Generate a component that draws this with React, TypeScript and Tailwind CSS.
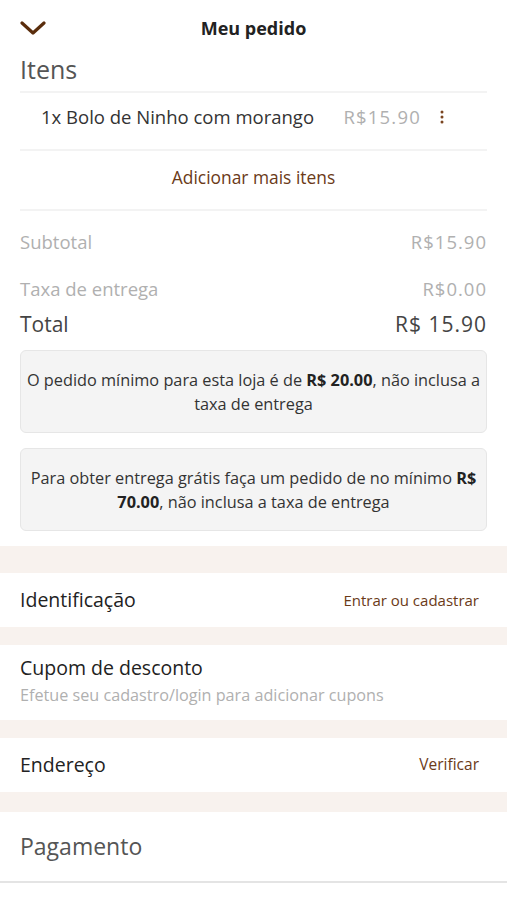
import React from "react";

const font = { fontFamily: '"Open Sans", "Noto Sans", sans-serif' };

export default function App() {
  return (
    <div className="w-[507px] min-h-[900px] bg-white text-[#333]" style={font}>
      {/* Header */}
      <div className="relative flex h-[56px] items-center justify-center">
        <svg className="absolute left-[20px] top-[20px]" width="26" height="16" viewBox="0 0 26 16">
          <path d="M2 3 L13 13 L24 3" fill="none" stroke="#5a2d0c" strokeWidth="3.2" strokeLinecap="round" strokeLinejoin="round" />
        </svg>
        <span className="text-[18px] font-bold text-[#222]">Meu pedido</span>
      </div>

      <div className="px-[20px]">
        <div className="-mt-[2px] text-[25px] leading-[30px] text-[#555]">Itens</div>
        <div className="mt-[7px] h-[2px] bg-[#f3f3f3]" />
        <div className="flex h-[56px] items-center pb-[8px] pl-[21px] pr-[42px]">
          <span className="text-[18.5px] text-[#333]">1x Bolo de Ninho com morango</span>
          <span className="ml-auto text-[18.5px] tracking-[1.2px] text-[#b0b0b0]">R$15.90</span>
          <svg className="ml-[18px]" width="6" height="14" viewBox="0 0 6 14">
            <circle cx="3" cy="2" r="1.5" fill="#7a4520" />
            <circle cx="3" cy="7" r="1.5" fill="#7a4520" />
            <circle cx="3" cy="12" r="1.5" fill="#7a4520" />
          </svg>
        </div>
        <div className="h-[2px] bg-[#f3f3f3]" />
        <div className="flex h-[58px] items-center justify-center pb-[6px] text-[17.4px] text-[#6b3a18]">
          Adicionar mais itens
        </div>
        <div className="h-[2px] bg-[#f3f3f3]" />

        <div className="mt-[19px] flex items-center justify-between text-[18.5px] leading-[24px] text-[#b0b0b0]">
          <span>Subtotal</span>
          <span className="tracking-[1px]">R$15.90</span>
        </div>
        <div className="mt-[23px] flex items-center justify-between text-[18.5px] leading-[24px] text-[#b0b0b0]">
          <span>Taxa de entrega</span>
          <span className="tracking-[1px]">R$0.00</span>
        </div>
        <div className="mt-[10px] flex items-center justify-between text-[21px] leading-[26px] text-[#444]">
          <span>Total</span>
          <span className="tracking-[1px]">R$ 15.90</span>
        </div>

        <div className="mt-[13px] flex h-[83px] items-center justify-center rounded-[6px] border border-[#e6e6e6] bg-[#f4f4f4] px-[3px] text-center text-[16.3px] leading-[24px] text-[#333]">
          <p>
            O pedido mínimo para esta loja é de <b className="text-[#222]">R$ 20.00</b>, não inclusa a taxa de entrega
          </p>
        </div>
        <div className="mt-[15px] flex h-[83px] items-center justify-center rounded-[6px] border border-[#e6e6e6] bg-[#f4f4f4] px-[8px] text-center text-[16.3px] leading-[24px] text-[#333]">
          <p>
            Para obter entrega grátis faça um pedido de no mínimo <b className="text-[#222]">R$ 70.00</b>, não inclusa a taxa de entrega
          </p>
        </div>
      </div>

      <div className="mt-[15px] h-[27px] bg-[#f8f2ee]" />
      <div className="flex h-[54px] items-center justify-between pl-[20px] pr-[28px]">
        <span className="text-[19.5px] text-[#222]">Identificação</span>
        <span className="text-[15px] text-[#6b3a18]">Entrar ou cadastrar</span>
      </div>
      <div className="h-[18px] bg-[#f8f2ee]" />
      <div className="flex h-[75px] flex-col px-[20px] pt-[10px]">
        <span className="text-[19.5px] leading-[26px] text-[#222]">Cupom de desconto</span>
        <span className="text-[16.2px] leading-[28px] text-[#b0b0b0]">Efetue seu cadastro/login para adicionar cupons</span>
      </div>
      <div className="h-[18px] bg-[#f8f2ee]" />
      <div className="flex h-[54px] items-center justify-between pl-[20px] pr-[28px]">
        <span className="text-[19.5px] text-[#222]">Endereço</span>
        <span className="text-[15.5px] text-[#6b3a18]">Verificar</span>
      </div>
      <div className="h-[20px] bg-[#f8f2ee]" />
      <div className="flex h-[69px] items-center px-[20px]">
        <span className="text-[23px] text-[#555]">Pagamento</span>
      </div>
      <div className="h-[2px] bg-[#e4e4e4]" />
    </div>
  );
}
